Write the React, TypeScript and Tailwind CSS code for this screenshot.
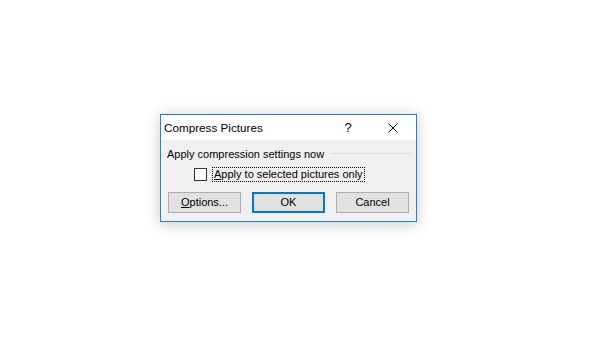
import { useState } from 'react';

export default function App() {
  const [checked, setChecked] = useState(false);

  return (
    <div className="w-[615px] h-[361px] bg-white pt-[114px] pl-[160px] font-['Liberation_Sans',sans-serif] text-[11px] text-black">
      <div className="w-[257px] h-[108px] border border-[#1883d7] bg-[#f0f0f0] shadow-[0_2px_14px_rgba(0,0,0,0.22)] flex flex-col">
        {/* title bar */}
        <div className="h-[25px] bg-white flex items-center pl-[3px]">
          <span className="flex-1 text-[11.7px] leading-none">Compress Pictures</span>
          <span className="w-[20px] text-center text-[13px] leading-none mr-[30px]">?</span>
          <svg width="10" height="10" viewBox="0 0 10 10" className="mr-[18px]">
            <path d="M0.5 0.5 L9.5 9.5 M9.5 0.5 L0.5 9.5" stroke="#000" strokeWidth="1" />
          </svg>
        </div>

        {/* body */}
        <div className="flex-1 flex flex-col pl-[6px] pr-[5px]">
          <div className="flex items-center mt-[6px] h-[16px]">
            <span className="leading-none">Apply compression settings now</span>
            <div className="flex-1 h-px bg-[#dcdcdc] ml-[6px] mt-[-1px]"></div>
          </div>

          <div className="flex items-center mt-[5px] ml-[27px] h-[15px]">
            <button
              onClick={() => setChecked(!checked)}
              className="w-[13px] h-[13px] border border-[#333] bg-white flex items-center justify-center"
            >
              {checked && (
                <svg width="9" height="9" viewBox="0 0 9 9">
                  <path d="M1 4.5 L3.5 7 L8 1.5" stroke="#000" strokeWidth="1.3" fill="none" />
                </svg>
              )}
            </button>
            <span className="ml-[5px] h-[15px] px-[1px] border border-dotted border-black flex items-center leading-none">
              <span><span className="underline">A</span>pply to selected pictures only</span>
            </span>
          </div>

          <div className="flex gap-[11px] mt-[10px] ml-[1px]">
            <button className="w-[73px] h-[21px] bg-[#e1e1e1] border border-[#adadad] flex items-center justify-center leading-none">
              <span><span className="underline">O</span>ptions...</span>
            </button>
            <button className="w-[73px] h-[21px] bg-[#e1e1e1] border-2 border-[#0078d7] flex items-center justify-center leading-none">
              OK
            </button>
            <button className="w-[73px] h-[21px] bg-[#e1e1e1] border border-[#adadad] flex items-center justify-center leading-none">
              Cancel
            </button>
          </div>
        </div>
      </div>
    </div>
  );
}
